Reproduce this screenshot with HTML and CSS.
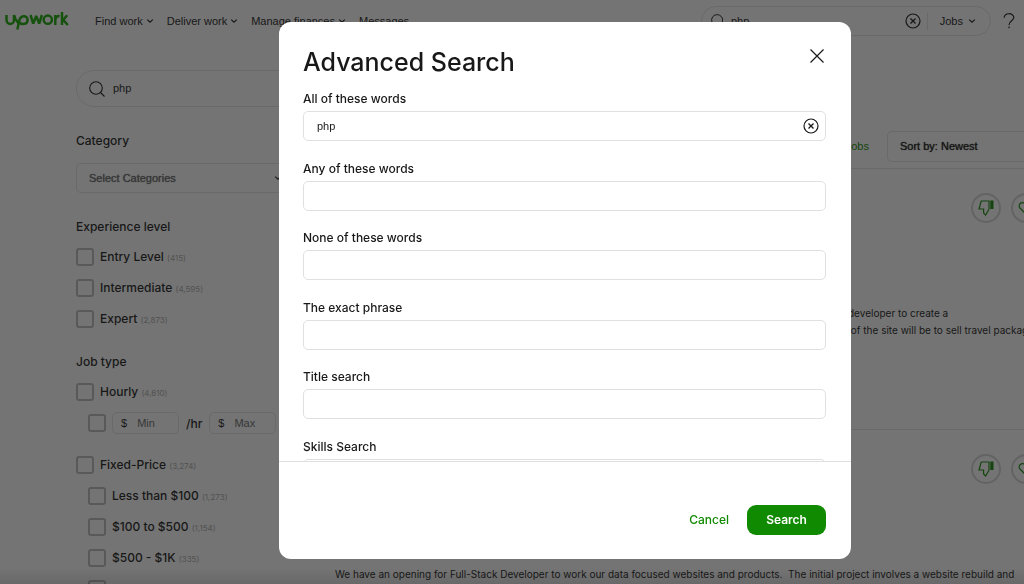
FILE: index.html
```
<!DOCTYPE html>
<html lang="en">
<head>
<meta charset="utf-8">
<title>Advanced Search</title>
<link rel="stylesheet" href="styles.css">
</head>
<body>
<svg class="defs" aria-hidden="true">
  <symbol id="chevron" viewBox="0 0 8 8"><path d="M1.200 2.600 4 5.200 6.800 2.600" fill="none" stroke="currentColor" stroke-width="1.200"/></symbol>
  <symbol id="magnifier" viewBox="0 0 16 16"><g fill="none" stroke="currentColor" stroke-width="1.100"><circle cx="7" cy="7" r="6.300"/><path d="m11.500 11.500 4 4"/></g></symbol>
  <symbol id="clear" viewBox="0 0 16 16"><g fill="none" stroke="currentColor"><circle cx="8" cy="8" r="7" stroke-width="1.200"/><path d="m5.500 5.500 5 5m0-5-5 5" stroke-width="1.300"/></g></symbol>
  <symbol id="thumb" viewBox="0 0 16 16"><path d="M11 1H3.200L1 9h4.600v4l2 2L11 9.200z" fill="none" stroke="currentColor" stroke-width="1.200"/><path d="M12.300.5h3.200v8.500h-3.200z" fill="currentColor"/></symbol>
  <symbol id="heart" viewBox="0 0 16 16"><path d="M8 14 2.200 8.300C-.8 5 3.400.2 8 4.200c4.600-4 8.800.8 5.800 4.100z" fill="none" stroke="currentColor" stroke-width="1.200"/></symbol>
</svg>

<div class="page">
  <header class="topbar">
    <a class="logo" href="#" aria-label="upwork">
      <svg viewBox="0 -1 64 20" fill="none" stroke="currentColor" stroke-width="2.500">
        <path d="M1.500 3v5c0 5.200 7.500 5.200 7.500 0V3c.8 3.200 2.300 6.200 4.300 8"/>
        <path d="M12.400 17.500 14 9.500C15.200 2.600 22.600 3 22.600 7.900c0 4.700-6.300 5.400-9.300 1.500"/>
        <path d="m25.500 3 2.700 8.500 3-7.500 3 7.500L36.900 3" stroke-linejoin="bevel"/>
        <circle cx="42.800" cy="7.700" r="4.100"/>
        <path d="M50.300 13V3m0 5.500c0-3 1.800-4.700 4.300-4.400M57 0v13m0-5.200h1.300L62.200 3.200m-4.200 4.500L62.800 13"/>
      </svg>
    </a>
    <nav class="nav">
      <a href="#">Find work <svg class="chev"><use href="#chevron"/></svg></a>
      <a href="#">Deliver work <svg class="chev"><use href="#chevron"/></svg></a>
      <a href="#">Manage finances <svg class="chev"><use href="#chevron"/></svg></a>
      <a href="#">Messages</a>
    </nav>
    <form class="topsearch">
      <svg class="i14"><use href="#magnifier"/></svg>
      <input type="text" value="php" aria-label="Search jobs">
      <button type="button" class="plain" aria-label="Clear"><svg class="i16"><use href="#clear"/></svg></button>
      <button type="button" class="plain scope">Jobs <svg class="chev"><use href="#chevron"/></svg></button>
    </form>
    <a class="help" href="#" aria-label="Help">
      <svg viewBox="0 0 12 16" fill="none" stroke="currentColor" stroke-width="1.200"><path d="M1.200 4.800C1.200-.6 10.800-.6 10.800 4.600 10.800 8 6 7.400 6 12"/><path d="M6 13.600V15.200"/></svg>
    </a>
  </header>

  <div class="columns">
    <aside class="sidebar">
      <div class="sidesearch">
        <svg class="i16"><use href="#magnifier"/></svg>
        <input type="text" value="php" aria-label="Search">
      </div>
      <section class="group">
        <h2>Category</h2>
        <button type="button" class="picker">Select Categories <svg class="chev"><use href="#chevron"/></svg></button>
      </section>
      <section class="group">
        <h2>Experience level</h2>
        <div class="checks">
          <label><input type="checkbox"><span>Entry Level <small>(415)</small></span></label>
          <label><input type="checkbox"><span>Intermediate <small>(4,595)</small></span></label>
          <label><input type="checkbox"><span>Expert <small>(2,873)</small></span></label>
        </div>
      </section>
      <section class="group">
        <h2>Job type</h2>
        <div class="checks">
          <label><input type="checkbox"><span>Hourly <small>(4,610)</small></span></label>
          <div class="rate">
            <input type="checkbox" aria-label="Custom hourly rate">
            <span class="money">$<input type="text" placeholder="Min" aria-label="Minimum rate"></span>
            <span class="per">/hr</span>
            <span class="money">$<input type="text" placeholder="Max" aria-label="Maximum rate"></span>
          </div>
          <label class="fixed"><input type="checkbox"><span>Fixed-Price <small>(3,274)</small></span></label>
          <label class="sub"><input type="checkbox"><span>Less than $100 <small>(1,273)</small></span></label>
          <label class="sub"><input type="checkbox"><span>$100 to $500 <small>(1,154)</small></span></label>
          <label class="sub"><input type="checkbox"><span>$500 - $1K <small>(335)</small></span></label>
          <label class="sub"><input type="checkbox"><span>$1K - $5K</span></label>
        </div>
      </section>
    </aside>

    <main class="results">
      <div class="sortbar">
        <a href="#">Jobs</a>
        <button type="button" class="sort">Sort by: Newest</button>
      </div>
      <article class="job">
        <div class="actions">
          <button type="button" class="round" aria-label="Not interested"><svg class="i16"><use href="#thumb"/></svg></button>
          <button type="button" class="round" aria-label="Save job"><svg class="i16"><use href="#heart"/></svg></button>
        </div>
        <p class="excerpt">developer to create a<br>&nbsp;of the site will be to sell travel packages</p>
      </article>
      <article class="job">
        <div class="actions">
          <button type="button" class="round" aria-label="Not interested"><svg class="i16"><use href="#thumb"/></svg></button>
          <button type="button" class="round" aria-label="Save job"><svg class="i16"><use href="#heart"/></svg></button>
        </div>
        <p class="summary">We have an opening for Full-Stack Developer to work our data focused websites and products.&nbsp; The initial project involves a website rebuild and</p>
      </article>
    </main>
  </div>
</div>

<div class="overlay">
  <div class="modal" role="dialog" aria-modal="true" aria-labelledby="title">
    <div class="modalhead">
      <h1 id="title">Advanced Search</h1>
      <button type="button" class="plain" aria-label="Close"><svg class="close" viewBox="0 0 16 16" fill="none" stroke="currentColor" stroke-width="1.200"><path d="m1.500 1.500 13 13m0-13-13 13"/></svg></button>
    </div>
    <form class="fields" id="advanced">
      <div class="field"><label for="all">All of these words</label>
        <div class="box"><input id="all" type="text" value="php"><button type="button" class="plain" aria-label="Clear"><svg class="i16"><use href="#clear"/></svg></button></div></div>
      <div class="field"><label for="any">Any of these words</label><div class="box"><input id="any" type="text"></div></div>
      <div class="field"><label for="none">None of these words</label><div class="box"><input id="none" type="text"></div></div>
      <div class="field"><label for="exact">The exact phrase</label><div class="box"><input id="exact" type="text"></div></div>
      <div class="field"><label for="jobtitle">Title search</label><div class="box"><input id="jobtitle" type="text"></div></div>
      <div class="field"><label for="skills">Skills Search</label><div class="box"><input id="skills" type="text"></div></div>
    </form>
    <footer class="modalfoot">
      <button type="button" class="cancel">Cancel</button>
      <button type="submit" form="advanced" class="submit">Search</button>
    </footer>
  </div>
</div>
</body>
</html>
```
FILE: styles.css
```
* { box-sizing: border-box; }
body { margin: 0; font-family: "Liberation Sans", Arial, sans-serif; font-size: 11px; line-height: 17px; color: #181818; background: #fff; }
button, input { font: inherit; color: inherit; }
input[type="text"] { border: 0; padding: 0; background: none; outline: 0; min-width: 0; flex: 1; }
a { color: inherit; text-decoration: none; }
h1, h2, p { margin: 0; }
svg { display: block; flex: none; }
.defs { position: absolute; width: 0; height: 0; }
.chev { width: 8px; height: 8px; }
.i14 { width: 14px; height: 14px; }
.i16 { width: 16px; height: 16px; }
.plain { display: flex; align-items: center; border: 0; padding: 0; background: none; }
h1, h2, .checks label, .per, .field label, .modalfoot button { font-family: Inter, "Liberation Sans", sans-serif; font-weight: 500; }

.page { height: 100vh; overflow: hidden; }
.topbar { display: flex; align-items: center; height: 42px; padding: 0 9px 0 5px; }
.logo { color: #14a800; }
.logo svg { width: 64px; height: 20px; }
.nav { display: flex; gap: 13px; margin-left: 26px; white-space: nowrap; }
.nav a { display: flex; align-items: center; gap: 3px; }
.topsearch { display: flex; align-items: center; width: 290px; height: 30px; margin-left: auto; padding: 0 14px 0 9px; border: 1px solid #e4e4e4; border-radius: 15px; }
.topsearch input { margin-left: 6px; }
.scope { gap: 5px; margin-left: 6px; padding-left: 12px; border-left: 1px solid #e4e4e4; }
.help { margin-left: 12px; }
.help svg { width: 12px; height: 16px; }

.columns { display: flex; }
.sidebar { flex: none; width: 335px; padding: 28px 16px 0 76px; }
.sidesearch { display: flex; align-items: center; gap: 8px; height: 37px; padding: 0 12px; border: 1px solid #e4e4e4; border-radius: 18px; }
.group { margin-top: 25px; }
h2 { font-size: 12px; line-height: 17px; }
.picker { display: flex; align-items: center; justify-content: space-between; width: 219px; height: 30px; margin-top: 14px; padding: 0 12px; border: 1px solid #e4e4e4; border-radius: 5px; background: none; color: #676767; text-shadow: 0 0 1px currentColor; }
.picker svg { color: #181818; }
.checks { display: flex; flex-direction: column; gap: 13px; margin-top: 13px; }
.checks label { display: flex; align-items: center; gap: 6px; height: 18px; font-size: 12px; white-space: nowrap; }
.checks small { font-size: 8px; font-weight: 400; color: #aaa; }
input[type="checkbox"] { appearance: none; flex: none; width: 18px; height: 18px; margin: 0; border: 2px solid #bbb; border-radius: 3px; }
.checks .sub, .rate { margin-left: 12px; }
.rate { display: flex; align-items: center; height: 18px; gap: 6px; }
.money { display: flex; flex: none; align-items: center; gap: 10px; width: 67px; height: 22px; padding: 0 8px; border: 1px solid #e4e4e4; border-radius: 5px; }
.money input::placeholder { color: #676767; opacity: 1; }
.per { font-size: 12px; padding: 0 1px; }
.checks .fixed { margin-top: 11px; }

.results { flex: 1; min-width: 0; padding-top: 89px; }
.sortbar { display: flex; align-items: center; justify-content: flex-end; gap: 18px; height: 38px; padding-bottom: 7px; border-bottom: 1px solid #e4e4e4; color: #108a00; }
.sort { width: 137px; height: 31px; padding: 0 12px; border: 1px solid #e4e4e4; border-right: 0; border-radius: 5px 0 0 5px; background: none; color: #181818; text-align: left; text-shadow: 0 0 1px currentColor; }
.job { display: flex; flex-direction: column; height: 261px; padding-top: 24px; border-bottom: 1px solid #e4e4e4; }
.actions { display: flex; justify-content: flex-end; gap: 10px; margin-right: -17px; }
.round { display: flex; flex: none; align-items: center; justify-content: center; width: 30px; height: 30px; padding: 0; border: 2px solid #d5d5d5; border-radius: 50%; background: none; color: #108a00; }
.excerpt, .summary { margin-top: 82px; font-family: Inter, "Liberation Sans", sans-serif; font-size: 10px; white-space: nowrap; }
.excerpt { align-self: flex-end; width: 176px; }

.overlay { position: fixed; inset: 0; padding: 22px 173px 25px 279px; background: linear-gradient(to top, rgba(0, 0, 0, .1), transparent 16px), rgba(24, 24, 24, .6); }
.modal { display: flex; flex-direction: column; height: 100%; border-radius: 12px; background: #fff; overflow: hidden; }
.modalhead { display: flex; align-items: flex-start; justify-content: space-between; padding: 24px 26px 0 24px; }
h1 { font-size: 25px; line-height: 32px; }
.close { width: 16px; height: 16px; margin-top: 2px; }
.fields { flex: 1; min-height: 0; overflow: hidden; padding: 13px 25px 0 24px; }
.field { margin-bottom: 20px; }
.field:nth-child(even) { margin-bottom: 19px; }
.field label { display: block; margin-bottom: 4px; font-size: 12px; line-height: 16px; }
.box { display: flex; align-items: center; height: 30px; padding: 0 6px 0 13px; border: 1px solid #e0e0e0; border-radius: 5px; }
.modalfoot { display: flex; flex: none; align-items: center; justify-content: flex-end; gap: 18px; height: 98px; padding: 18px 25px 0; border-top: 1px solid #e0e0e0; }
.modalfoot button { border: 0; font-size: 12px; }
.cancel { padding: 0; background: none; color: #108a00; }
.modalfoot .submit { width: 79px; height: 30px; padding: 0; border-radius: 9px; background: #108a00; color: #fff; font-weight: 600; }
```
